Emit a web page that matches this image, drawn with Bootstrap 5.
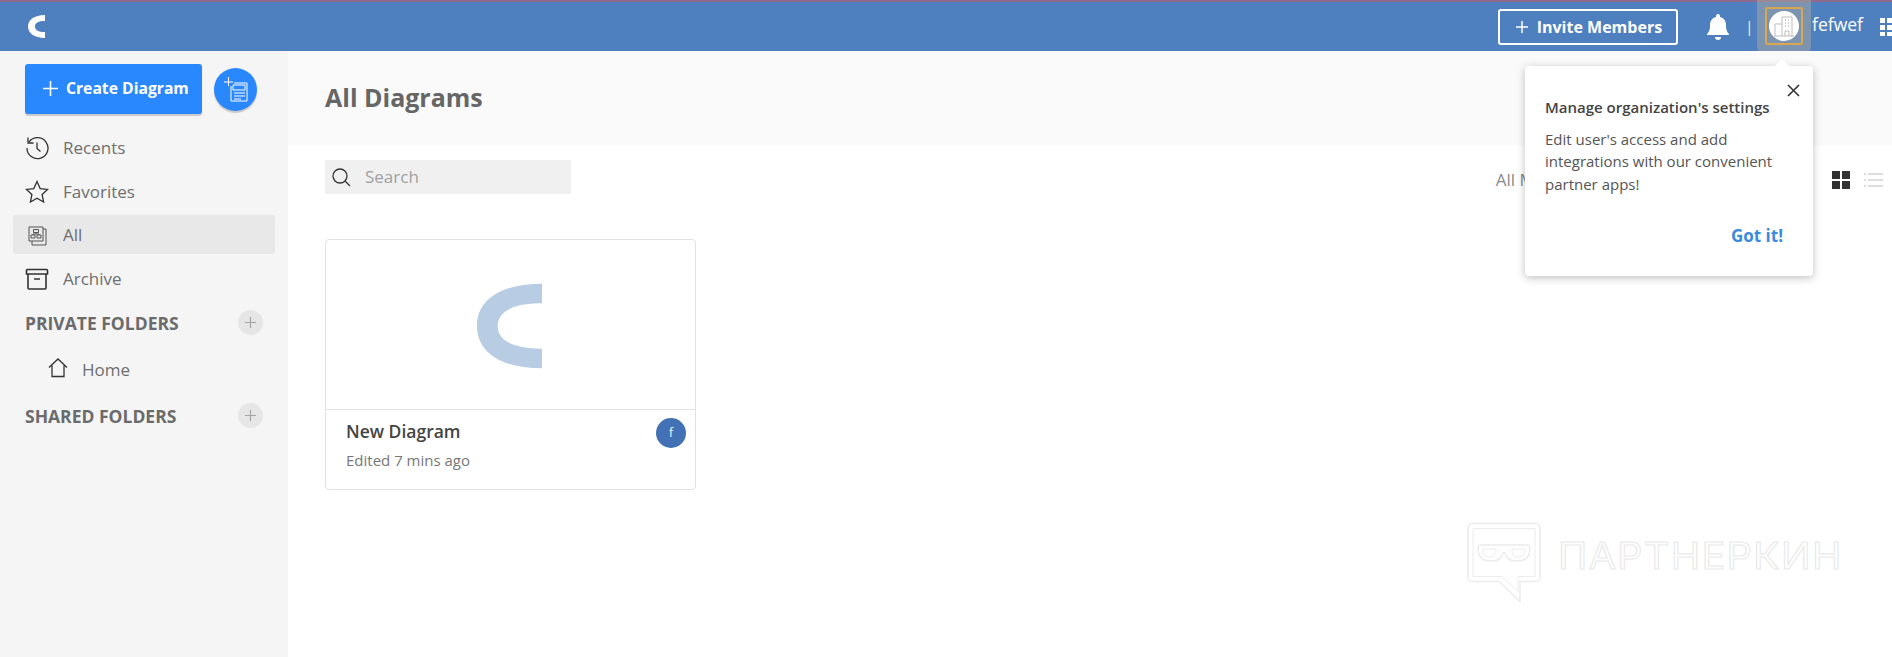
<!DOCTYPE html>
<html lang="en">
<head>
    <meta charset="UTF-8">
    <meta name="viewport" content="width=device-width, initial-scale=1.0">
    <title>All Diagrams</title>
    <link href="https://cdn.jsdelivr.net/npm/bootstrap@5.3.0/dist/css/bootstrap.min.css" rel="stylesheet">
    <style>
        html, body { height: 100%; overflow: hidden; }
        body { font-family: "Open Sans", "Liberation Sans", sans-serif; color: #6b6b6b; background: #fff; }

        /* top bar */
        .topbar { height: 51px; background: #4e7fbf; border-top: 2px solid #8d6a8c; padding-left: 28px; }
        .invite-btn { width: 180px; height: 36px; border: 2px solid #fff; border-radius: 3px; color: #fff; font-size: 16px; font-weight: 700; gap: 8px; }
        .bell-icon { margin-left: 28px; }
        .bar-divider { color: #fff; font-size: 14px; margin: 0 4px 0 15px; }
        .org-tile { width: 54px; height: 54px; margin-top: -2px; align-self: flex-start; background: rgba(170, 170, 160, .5); border-radius: 0 0 6px 6px; }
        .org-ring { width: 38px; height: 38px; border: 2px solid #d9a74f; border-radius: 2px; }
        .org-face { width: 30px; height: 30px; border-radius: 50%; background: #fff; }
        .user-name { color: #fff; font-size: 17.5px; margin: -4px 17px 0 1px; }

        /* sidebar */
        .side { width: 288px; flex: none; height: calc(100vh - 51px); background: #f5f5f5; padding: 13px 13px 0; }
        .side-top { margin-bottom: 14px; }
        .create-btn { width: 177px; height: 50px; margin-left: 12px; background: #2a88ff; color: #fff; font-size: 15.7px; font-weight: 700; border: 0; border-radius: 3px; box-shadow: 0 2px 1px #c9c9c9; gap: 8px; padding: 0 0 1px 18px; }
        .round-btn { width: 43px; height: 43px; margin-left: 12px; border-radius: 50%; background: #2a88ff; box-shadow: 0 2px 1px #c9c9c9; }
        .side-link { height: 39px; margin-top: 5px; padding: 0 12px; gap: 14px; font-size: 17px; color: #6f6f6f; text-decoration: none; border-radius: 3px; width: 262px; }
        .side-link svg { flex: none; }
        .side-link.is-on { background: #e8e8e8; margin-top: 4px; }
        .side-link.is-sub { margin-top: 15px; padding-left: 35px; gap: 14px; }
        .side-link.is-sub svg { margin-top: -3px; }
        .folder-head { height: 24px; margin-top: 13px; padding: 0 12px; width: 262px; font-size: 17.5px; font-weight: 700; color: #6b6b6b; }
        .folder-head.is-last { margin-top: 15px; }
        .plus-dot { width: 25px; height: 25px; margin-top: -2px; border-radius: 50%; background: #e6e6e6; }

        /* main */
        .page-head { height: 94px; background: #fafafa; padding-left: 37px; }
        .page-head h1 { font-size: 25px; font-weight: 700; color: #666; margin: 0 0 2px; }
        .tools { padding: 15px 9px 0 37px; height: 94px; }
        .search-box { width: 246px; height: 34px; background: #f0f0f0; padding-left: 7px; gap: 14px; font-size: 17px; color: #a0a0a0; }
        .view-tools { padding-top: 7px; }
        .view-filter { white-space: nowrap; font-size: 17px; color: #8a8a8a; margin-right: 237px; }
        .grid-icon { margin-right: 14px; }
        .diagram-card { width: 371px; height: 251px; margin-left: 37px; border-color: #e2e2e2; border-radius: 4px; }
        .diagram-thumb { height: 170px; padding-top: 2px; padding-right: 2px; border-bottom: 1px solid #e2e2e2; }
        .diagram-info { padding: 9px 20px 0; }
        .diagram-title { font-size: 17.5px; font-weight: 600; color: #444; line-height: 24px; }
        .diagram-time { font-size: 15px; color: #777; line-height: 20px; margin-top: 7px; }
        .owner-dot { width: 30px; height: 30px; border-radius: 50%; background: #4272b5; color: #fff; font-size: 12px; position: absolute; right: 9px; top: 178px; }

        /* onboarding popover */
        .tip { position: absolute; left: 1525px; top: 66px; width: 288px; height: 210px; padding: 30px 20px 0; background: #fff; border-radius: 4px; box-shadow: 0 2px 8px rgba(0, 0, 0, .25); font-size: 15px; line-height: 22.5px; color: #555; z-index: 5; }
        .tip::before { content: ""; position: absolute; right: 24px; top: -7px; border: 7px solid transparent; border-top: 0; border-bottom-color: #fff; }
        .tip-title { font-weight: 600; color: #444; margin-bottom: 9px; }
        .tip-close { position: absolute; right: 13px; top: 18px; line-height: 0; }
        .tip-ok { position: absolute; right: 30px; top: 158px; font-size: 17px; font-weight: 700; color: #3a8ae0; line-height: 24px; }

        /* watermark */
        .wmark { position: absolute; left: 1466px; top: 522px; gap: 16px; }
        .wmark-text { font-family: Inter, "Liberation Sans", sans-serif; font-size: 37px; font-weight: 400; letter-spacing: 1.2px; line-height: 40px; color: transparent; -webkit-text-stroke: 1px #e8e8e8; margin-top: -15px; transform: scaleX(1.07); transform-origin: left center; }
    </style>
</head>
<body>
    <!-- Top bar -->
    <nav class="topbar d-flex align-items-center">
        <svg width="17" height="23" viewBox="0 0 17 23"><path d="M17 0C6 0 0 5 0 11.500S6 23 17 23v-6C10 17 7 15 7 11.500S10 6 17 6z" fill="#fff"/></svg>
        <div class="ms-auto d-flex align-items-center">
            <button class="invite-btn btn d-flex align-items-center justify-content-center p-0">
                <svg width="14" height="14" viewBox="0 0 14 14"><path d="M7 1v12M1 7h12" stroke="#fff" stroke-width="1.5"/></svg>
                Invite Members
            </button>
            <svg class="bell-icon" width="24" height="27" viewBox="0 0 24 27"><path d="M12 1a2 2 0 0 1 2 2v1c4 1 6 4 6 8 0 5 1 7 3 9v1H1v-1c2-2 3-4 3-9 0-4 2-7 6-8V3a2 2 0 0 1 2-2zM9 24h6a3 3 0 0 1-6 0z" fill="#fff"/></svg>
            <span class="bar-divider">|</span>
            <div class="org-tile d-flex align-items-center justify-content-center">
                <div class="org-ring d-flex align-items-center justify-content-center">
                    <div class="org-face d-flex align-items-center justify-content-center">
                        <svg width="20" height="22" viewBox="0 0 20 22" fill="none" stroke="#bdbdbd" stroke-width="1"><path d="M8 21V2h10v19M1 21V9h7M11 21v-5h4v5M0 21h20"/><path d="M11 5h1M14 5h1M11 8h1M14 8h1M11 11h1M14 11h1" stroke-width="1.5"/></svg>
                    </div>
                </div>
            </div>
            <span class="user-name">fefwef</span>
            <svg width="12" height="18" viewBox="0 0 12 18" fill="#fff"><rect width="5" height="5" x="0" y="0"/><rect width="5" height="5" x="7" y="0"/><rect width="5" height="5" x="0" y="7"/><rect width="5" height="5" x="7" y="7"/><rect width="5" height="5" x="0" y="14"/><rect width="5" height="5" x="7" y="14"/></svg>
        </div>
    </nav>

    <div class="d-flex">
        <!-- Sidebar -->
        <aside class="side">
            <div class="side-top d-flex align-items-center">
                <button class="create-btn btn d-flex align-items-center">
                    <svg width="15" height="15" viewBox="0 0 15 15"><path d="M7.5 0v15M0 7.5h15" stroke="#fff" stroke-width="1.6"/></svg>
                    Create Diagram
                </button>
                <div class="round-btn d-flex align-items-center justify-content-center">
                    <svg width="24" height="25" viewBox="0 0 24 25" fill="none" stroke="#fff" stroke-width="1"><path d="M0 5h9M4.500 0v9"/><path d="M7 9V24H23V6H10"/><path d="M9 8h12v5H9zM10 16h11M10 19h11M10 22h7"/></svg>
                </div>
            </div>
            <a class="side-link d-flex align-items-center">
                <svg width="24" height="24" viewBox="0 0 24 24" fill="none" stroke="#333" stroke-width="1.3"><path d="M4 6a10.500 10.500 0 1 1-2 6"/><path d="M3 1.500V7h5.500M12 6.500v6l3.500 3"/></svg>
                Recents
            </a>
            <a class="side-link d-flex align-items-center">
                <svg width="24" height="24" viewBox="0 0 24 24" fill="none" stroke="#333" stroke-width="1.3"><path d="M12 1.500l3.200 7.100 7.300.8-5.400 5 1.500 7.600L12 18.200 5.400 22l1.500-7.600-5.400-5 7.300-.8z"/></svg>
                Favorites
            </a>
            <a class="side-link is-on d-flex align-items-center">
                <svg width="24" height="24" viewBox="0 0 24 24" fill="none" stroke="#555" stroke-width="1"><path d="M4 4h14v14H4z"/><path d="M18 6h3v16H7v-4"/><path d="M8.500 6.500h5v3h-5zM6 12h4v3H6zM12 12h4v3h-4zM11 9.500V11M8 12v-1h6v1"/></svg>
                All
            </a>
            <a class="side-link d-flex align-items-center">
                <svg width="24" height="24" viewBox="0 0 24 24" fill="none" stroke="#333" stroke-width="1.600"><path d="M1.500 3.500a1 1 0 0 1 1-1h19a1 1 0 0 1 1 1V7h-21zM3 7v14a1 1 0 0 0 1 1h16a1 1 0 0 0 1-1V7M9 12h6"/></svg>
                Archive
            </a>
            <div class="folder-head d-flex align-items-center justify-content-between">
                PRIVATE FOLDERS
                <span class="plus-dot d-flex align-items-center justify-content-center"><svg width="11" height="11" viewBox="0 0 11 11"><path d="M5.500 0v11M0 5.500h11" stroke="#a5a5a5" stroke-width="1.200"/></svg></span>
            </div>
            <a class="side-link is-sub d-flex align-items-center">
                <svg width="20" height="20" viewBox="0 0 20 20" fill="none" stroke="#333" stroke-width="1.300"><path d="M1 9.500L10 1l9 8.500M4 7.500V18.500h12V7.500"/></svg>
                Home
            </a>
            <div class="folder-head is-last d-flex align-items-center justify-content-between">
                SHARED FOLDERS
                <span class="plus-dot d-flex align-items-center justify-content-center"><svg width="11" height="11" viewBox="0 0 11 11"><path d="M5.500 0v11M0 5.500h11" stroke="#a5a5a5" stroke-width="1.200"/></svg></span>
            </div>
        </aside>

        <!-- Main -->
        <main class="flex-grow-1">
            <div class="page-head d-flex align-items-center">
                <h1>All Diagrams</h1>
            </div>
            <div class="tools d-flex align-items-start">
                <div class="search-box d-flex align-items-center">
                    <svg width="19" height="19" viewBox="0 0 19 19" fill="none" stroke="#333" stroke-width="1.300"><circle cx="8" cy="8" r="7"/><path d="M13 13l5 5"/></svg>
                    Search
                </div>
                <div class="view-tools ms-auto d-flex align-items-center">
                    <span class="view-filter">All Members</span>
                    <svg class="grid-icon" width="18" height="18" viewBox="0 0 18 18" fill="#333"><rect width="8" height="8"/><rect x="10" width="8" height="8"/><rect y="10" width="8" height="8"/><rect x="10" y="10" width="8" height="8"/></svg>
                    <svg width="19" height="14" viewBox="0 0 19 14" stroke="#ddd" stroke-width="2"><path d="M0 1h2M4 1h15M0 7h2M4 7h15M0 13h2M4 13h15"/></svg>
                </div>
            </div>
            <div class="diagram-card card">
                <div class="diagram-thumb d-flex align-items-center justify-content-center">
                    <svg width="65" height="86" viewBox="0 0 66 86"><path d="M66 0C25 0 0 16 0 43s25 43 66 43V66C37 66 21 58 21 43s16-23 45-23z" fill="#b8cce4"/></svg>
                </div>
                <div class="diagram-info">
                    <div class="diagram-title">New Diagram</div>
                    <div class="diagram-time">Edited 7 mins ago</div>
                </div>
                <span class="owner-dot d-flex align-items-center justify-content-center">f</span>
            </div>
        </main>
    </div>

    <!-- Onboarding popover -->
    <div class="tip">
        <span class="tip-close"><svg width="13" height="13" viewBox="0 0 13 13"><path d="M1 1l11 11M12 1L1 12" stroke="#333" stroke-width="1.600"/></svg></span>
        <div class="tip-title">Manage organization's settings</div>
        <div>Edit user's access and add integrations with our convenient partner apps!</div>
        <span class="tip-ok">Got it!</span>
    </div>

    <!-- Watermark -->
    <div class="wmark d-flex align-items-center">
        <svg width="76" height="82" viewBox="0 0 76 82" fill="none" stroke="#ececec" stroke-width="1.500"><path d="M6 1.500h64a4 4 0 0 1 4 4v50a4 4 0 0 1-4 4H54v20L33 59.500H6a4 4 0 0 1-4-4v-50a4 4 0 0 1 4-4z"/><path d="M7 6.500h62v48H52v15L36 54.500H7z" stroke-width="1"/><path d="M12 26a3 3 0 0 1 3-3h46a3 3 0 0 1 3 3c0 8-4 13-13 13-7 0-11-3-12-8h-2c-1 5-5 8-12 8-9 0-13-5-13-13z"/><path d="M17 27h13c0 5-2 8-7 8s-6-3-6-8zM46 27h13c0 5-2 8-7 8s-6-3-6-8z" stroke-width="1"/></svg>
        <span class="wmark-text">ПАРТНЕРКИН</span>
    </div>

    <script src="https://cdn.jsdelivr.net/npm/bootstrap@5.3.0/dist/js/bootstrap.bundle.min.js"></script>
</body>
</html>
